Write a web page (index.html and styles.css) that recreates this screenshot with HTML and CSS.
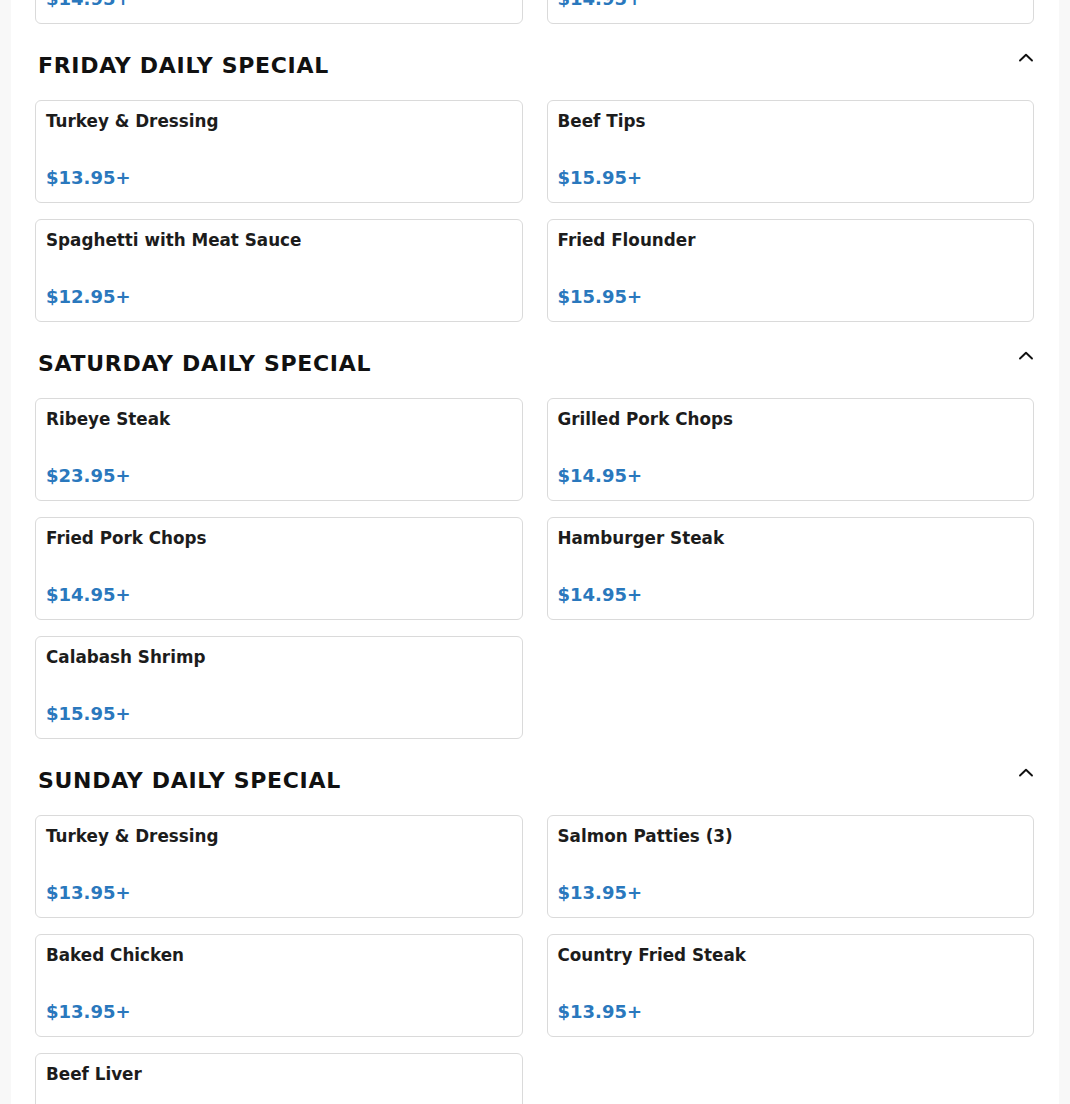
FILE: index.html
```html
<!DOCTYPE html>
<html lang="en">
<head>
<meta charset="utf-8">
<title>Daily Specials</title>
<link rel="stylesheet" href="styles.css">
</head>
<body>
<main class="panel">
  <section class="section" id="thursday">
    <div class="section-head">
      <h2 class="section-title">THURSDAY DAILY SPECIAL</h2>
      <svg class="chevron" viewBox="0 0 16 16" width="16" height="16"><polyline points="2,10.5 8,4.8 14,10.5"/></svg>
    </div>
    <div class="grid">
      <div class="card"><div class="name">Chicken &amp; Pastry</div><div class="price">$13.95+</div></div>
      <div class="card"><div class="name">Meatloaf</div><div class="price">$13.95+</div></div>
      <div class="card"><div class="name">Fried Chicken</div><div class="price">$14.95+</div></div>
      <div class="card"><div class="name">Pork Chops</div><div class="price">$14.95+</div></div>
    </div>
  </section>

  <section class="section" id="friday">
    <div class="section-head">
      <h2 class="section-title">FRIDAY DAILY SPECIAL</h2>
      <svg class="chevron" viewBox="0 0 16 16" width="16" height="16"><polyline points="2,10.5 8,4.8 14,10.5"/></svg>
    </div>
    <div class="grid">
      <div class="card"><div class="name">Turkey &amp; Dressing</div><div class="price">$13.95+</div></div>
      <div class="card"><div class="name">Beef Tips</div><div class="price">$15.95+</div></div>
      <div class="card"><div class="name">Spaghetti with Meat Sauce</div><div class="price">$12.95+</div></div>
      <div class="card"><div class="name">Fried Flounder</div><div class="price">$15.95+</div></div>
    </div>
  </section>

  <section class="section" id="saturday">
    <div class="section-head">
      <h2 class="section-title">SATURDAY DAILY SPECIAL</h2>
      <svg class="chevron" viewBox="0 0 16 16" width="16" height="16"><polyline points="2,10.5 8,4.8 14,10.5"/></svg>
    </div>
    <div class="grid">
      <div class="card"><div class="name">Ribeye Steak</div><div class="price">$23.95+</div></div>
      <div class="card"><div class="name">Grilled Pork Chops</div><div class="price">$14.95+</div></div>
      <div class="card"><div class="name">Fried Pork Chops</div><div class="price">$14.95+</div></div>
      <div class="card"><div class="name">Hamburger Steak</div><div class="price">$14.95+</div></div>
      <div class="card"><div class="name">Calabash Shrimp</div><div class="price">$15.95+</div></div>
    </div>
  </section>

  <section class="section" id="sunday">
    <div class="section-head">
      <h2 class="section-title">SUNDAY DAILY SPECIAL</h2>
      <svg class="chevron" viewBox="0 0 16 16" width="16" height="16"><polyline points="2,10.5 8,4.8 14,10.5"/></svg>
    </div>
    <div class="grid">
      <div class="card"><div class="name">Turkey &amp; Dressing</div><div class="price">$13.95+</div></div>
      <div class="card"><div class="name">Salmon Patties (3)</div><div class="price">$13.95+</div></div>
      <div class="card"><div class="name">Baked Chicken</div><div class="price">$13.95+</div></div>
      <div class="card"><div class="name">Country Fried Steak</div><div class="price">$13.95+</div></div>
      <div class="card"><div class="name">Beef Liver</div><div class="price">$13.95+</div></div>
    </div>
  </section>
</main>
<script src="script.js"></script>
</body>
</html>
```

FILE: styles.css
```css
html {
  scroll-behavior: auto;
}
body {
  margin: 0;
  background: #f8f8f8;
  font-family: "DejaVu Sans", "Liberation Sans", sans-serif;
  color: #1c1c1c;
}
.panel {
  background: #ffffff;
  margin: 0 11px;
  padding: 0 25px 40px 24px;
}
.section {
  padding-top: 28px;
}
.section-head {
  display: flex;
  justify-content: space-between;
  align-items: flex-start;
  height: 28px;
  margin-bottom: 20px;
  padding-left: 3px;
}
.section-title {
  margin: 0;
  font-size: 22px;
  line-height: 28px;
  font-weight: bold;
  letter-spacing: 0.7px;
  color: #111111;
}
.chevron {
  margin-top: -2px;
  fill: none;
  stroke: #111111;
  stroke-width: 1.9;
  stroke-linecap: round;
  stroke-linejoin: round;
}
.grid {
  display: grid;
  grid-template-columns: 1fr 1fr;
  gap: 16px 24px;
}
.card {
  border: 1px solid #dadada;
  border-radius: 6px;
  padding: 10px 10px 13px;
}
.name {
  font-size: 16.8px;
  line-height: 21px;
  font-weight: bold;
  color: #1c1c1c;
}
.price {
  margin-top: 35px;
  font-size: 18px;
  line-height: 22px;
  font-weight: bold;
  color: #2a78bd;
}
```

FILE: script.js
```js
(function () {
  var friday = document.getElementById('friday');
  var top = friday.getBoundingClientRect().top + window.scrollY;
  window.scrollTo(0, top - 24);
})();
```
